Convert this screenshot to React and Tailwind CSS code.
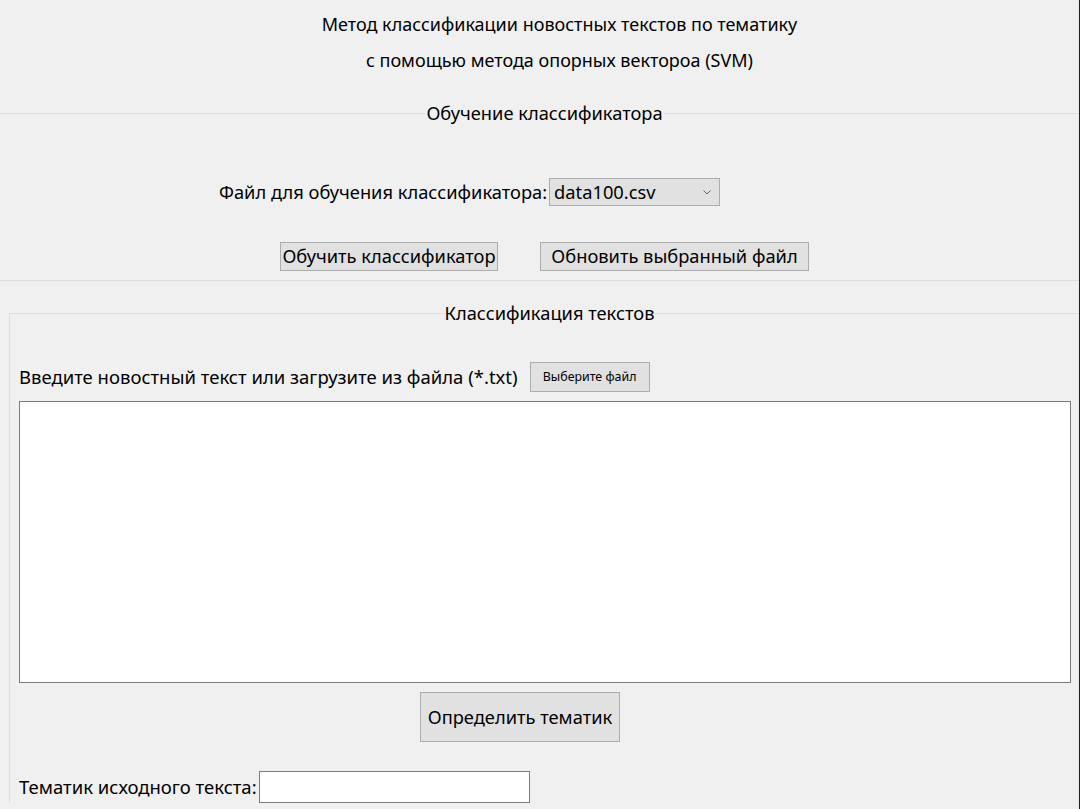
export default function App() {
  const ui = { fontFamily: '"Noto Sans", "Open Sans", sans-serif' };

  return (
    <div
      style={ui}
      className="w-[1080px] h-[809px] bg-[#f0f0f0] border-r border-[#1e1e1e] overflow-hidden text-black"
    >
      {/* заголовок */}
      <div className="pt-[6px] pl-[40px] text-center text-[18px] leading-[36px]">
        <div>Метод классификации новостных текстов по тематику</div>
        <div>с помощью метода опорных вектороа (SVM)</div>
      </div>

      {/* обучение */}
      <fieldset className="mt-[23px] w-[1089px] border-t border-b border-[#dcdcdc] pb-[9px]">
        <legend className="mx-auto px-[1px] text-[18.3px] leading-[24px]">Обучение классификатора</legend>

        <div className="mt-[53px] flex items-center pl-[219px]">
          <span className="text-[18.3px] leading-[28px]">Файл для обучения классификатора:</span>
          <div className="ml-[2px] flex h-[28px] w-[171px] items-center justify-between border border-[#acacac] bg-[#e1e1e1] pl-[4px] pr-[8px]">
            <span className="text-[18.3px]">data100.csv</span>
            <svg width="8" height="5" viewBox="0 0 8 5" className="text-[#606060]">
              <path d="M0.5 0.5 L4 4 L7.5 0.5" fill="none" stroke="currentColor" strokeWidth="1" />
            </svg>
          </div>
        </div>

        <div className="mt-[36px] flex items-center">
          <button className="ml-[280px] h-[29px] w-[218px] border border-[#adadad] bg-[#e1e1e1] text-[18.3px] leading-none">
            Обучить классификатор
          </button>
          <button className="ml-[42px] h-[29px] w-[269px] border border-[#adadad] bg-[#e1e1e1] text-[18.3px] leading-none">
            Обновить выбранный файл
          </button>
        </div>
      </fieldset>

      {/* классификация */}
      <fieldset className="ml-[9px] mt-[20px] w-[1080px] border-t border-l border-[#dcdcdc]">
        <legend className="mx-auto px-[1px] text-[18.3px] leading-[24px]">Классификация текстов</legend>

        <div className="pl-[9px]">
          <div className="mt-[37px] flex items-center">
            <span className="text-[18.5px]">Введите новостный текст или загрузите из файла (*.txt)</span>
            <button className="ml-[12px] h-[30px] w-[120px] border border-[#adadad] bg-[#e1e1e1] text-[12.4px] leading-none">
              Выберите файл
            </button>
          </div>

          <textarea className="mt-[9px] block h-[282px] w-[1052px] resize-none border border-[#7a7a7a] bg-white outline-none" />

          <button className="ml-[401px] mt-[9px] block h-[50px] w-[200px] border border-[#adadad] bg-[#e1e1e1] text-[18.3px] leading-none">
            Определить тематик
          </button>

          <div className="mt-[29px] flex items-center">
            <span className="text-[18.5px]">Тематик исходного текста:</span>
            <input className="ml-[2px] h-[32px] w-[271px] border border-[#7a7a7a] bg-white outline-none" />
          </div>
        </div>
      </fieldset>
    </div>
  );
}
